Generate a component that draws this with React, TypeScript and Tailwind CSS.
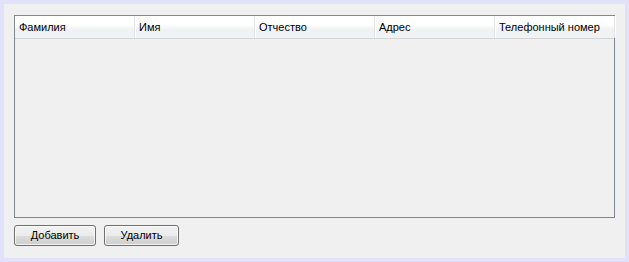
const columns = ['Фамилия', 'Имя', 'Отчество', 'Адрес', 'Телефонный номер'];

function Button({ label, width }: { label: string; width: string }) {
    return (
        <button
            className={`${width} h-[21px] rounded-[3px] border border-[#707070] bg-[linear-gradient(to_bottom,#f2f2f2_0%,#ebebeb_50%,#dddddd_51%,#cfcfcf_100%)] text-[11px] text-black shadow-[inset_0_0_0_1px_rgba(255,255,255,0.7)]`}
        >
            {label}
        </button>
    );
}

export default function App() {
    return (
        <div className="h-[262px] w-[629px] bg-[#e1e1fa] pl-[4px] pt-[4px]" style={{ fontFamily: '"Liberation Sans", Arial, sans-serif' }}>
            <div className="flex h-[254px] w-[621px] flex-col bg-[#f0f0f0] px-[10px] pt-[11px]">
                {/* Table */}
                <div className="h-[203px] w-[601px] border border-[#828790] bg-[#f0f0f0]">
                    <div className="flex h-[23px] border-b border-[#d5d5d5] bg-[linear-gradient(to_bottom,#ffffff_0%,#ffffff_40%,#f1f2f4_60%,#f1f2f4_100%)]">
                        {columns.map((c) => (
                            <div
                                key={c}
                                className="flex h-full w-[120px] shrink-0 items-center border-r border-r-[#e3e4e6] pl-[4px] text-[11px] text-black shadow-[1px_0_0_#ffffff]"
                            >
                                {c}
                            </div>
                        ))}
                    </div>
                </div>

                {/* Actions */}
                <div className="mt-[7px] flex gap-[8px]">
                    <Button label="Добавить" width="w-[82px]" />
                    <Button label="Удалить" width="w-[75px]" />
                </div>
            </div>
        </div>
    );
}
